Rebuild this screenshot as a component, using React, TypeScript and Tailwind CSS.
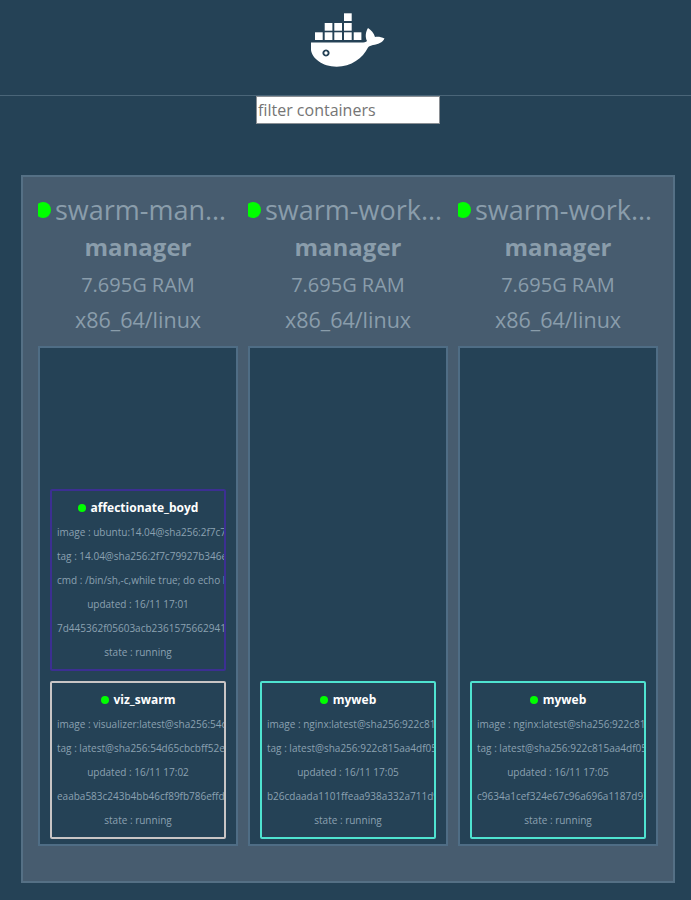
const font = "font-['Open_Sans',sans-serif]";

function Dot({ big }: { big?: boolean }) {
  return big ? (
    <span className="h-4 w-4 -ml-[3px] shrink-0 rounded-full bg-[#00ff00]" />
  ) : (
    <span className="inline-block h-2 w-2 rounded-full bg-[#00ff00]" />
  );
}

function Box({ name, color, lines }: { name: string; color: string; lines: string[] }) {
  return (
    <div className="overflow-hidden rounded-[2px] border-2 px-[5px] pb-[5px]" style={{ borderColor: color }}>
      <div className="flex h-[29px] items-center justify-center gap-[5px] pt-1 text-[12px] font-bold text-white">
        <Dot />
        <span>{name}</span>
      </div>
      {lines.map((l) => (
        <div key={l} className="h-6 whitespace-nowrap text-center text-[10px] leading-6 text-[#8ba1b1]">
          {l}
        </div>
      ))}
    </div>
  );
}

function Node({ name, boxes }: { name: string; boxes: { name: string; color: string; lines: string[] }[] }) {
  return (
    <div className="w-[200px] shrink-0">
      <div className="flex h-[46px] items-center gap-[4px] overflow-hidden pr-[5px] text-[#8a9dab]">
        <Dot big />
        <span className="truncate text-[27px]">{name}</span>
      </div>
      <div className="flex h-[28px] items-center justify-center text-[24px] font-bold text-[#8a9dab]">manager</div>
      <div className="mt-[10px] flex h-[28px] items-center justify-center text-[20px] text-[#8a9dab]">7.695G RAM</div>
      <div className="mt-[7px] flex h-[28px] items-center justify-center text-[21.5px] text-[#8a9dab]">x86_64/linux</div>
      <div className="mt-[12px] flex h-[500px] flex-col justify-end gap-2.5 border-2 border-[#4f6d85] bg-[#254256] pb-[5px] pl-[10px] pr-[10px]">
        {boxes.map((b) => (
          <Box key={b.name} {...b} />
        ))}
      </div>
    </div>
  );
}

export default function App() {
  return (
    <div className={`${font} h-[900px] w-[691px] overflow-hidden bg-[#254256]`}>
      <header className="flex h-[96px] justify-center border-b border-[#4a6578] pl-[5px] pt-[12px]">
        <svg width="74" height="56" viewBox="0 0 74 56" fill="#fff">
          <rect x="33" y="1.3" width="7.7" height="7.7" />
          <rect x="13.7" y="11" width="7.7" height="7.7" />
          <rect x="23.3" y="11" width="7.7" height="7.7" />
          <rect x="33" y="11" width="7.7" height="7.7" />
          <rect x="4" y="20.3" width="7.7" height="7.7" />
          <rect x="13.7" y="20.3" width="7.7" height="7.7" />
          <rect x="23.3" y="20.3" width="7.7" height="7.7" />
          <rect x="33" y="20.3" width="7.7" height="7.7" />
          <rect x="42.7" y="20.3" width="7.7" height="7.7" />
          <path
            fillRule="evenodd"
            d="M0 30.5H50C53 30.5 55 30 56 29C54 25 54.5 20 57 16C60 18 63 21 64 25C67 24.5 70.5 25 73.5 26.5C71.5 30.5 67 32.5 62 33C60 33.5 58 34 57 35.5C52 46 40 54.7 25.7 54.7C11 54.7 1 46 0 38ZM15 37.4a3.6 3.6 0 1 0 0.01 0ZM15 39.3a1.7 1.7 0 1 1 -0.01 0Z"
          />
        </svg>
      </header>
      <div className="flex justify-center pl-[5px]">
        <input
          placeholder="filter containers"
          className="h-[28px] w-[184px] border border-[#8a8f94] bg-white px-px text-[16px] text-[#757575] placeholder:text-[#757575]"
        />
      </div>
      <div className="ml-[21px] mt-[51px] flex h-[708px] w-[654px] gap-[10px] border-2 border-[#557085] bg-[#475c6f] px-[15px] pt-[10px]">
        <Node
          name="swarm-manager"
          boxes={[
            {
              name: "affectionate_boyd",
              color: "#3c2f92",
              lines: [
                "image : ubuntu:14.04@sha256:2f7c79927b346e436cc14c92bd4e5bd778c3bd7037f35bc639ac1589a7acfa90",
                "tag : 14.04@sha256:2f7c79927b346e436cc14c92bd4e5bd778c3bd7037f35bc639ac1589a7acfa90",
                "cmd : /bin/sh,-c,while true; do echo hello world; sleep 1; done",
                "updated : 16/11 17:01",
                "7d445362f05603acb2361575662941f2a2f8c3a9e1d0b7c4",
                "state : running",
              ],
            },
            {
              name: "viz_swarm",
              color: "#c9c5c5",
              lines: [
                "image : visualizer:latest@sha256:54d65cbcbff52ee7d789cd285fbe68f07a46e3419c8fcded437af4c616915c85",
                "tag : latest@sha256:54d65cbcbff52ee7d789cd285fbe68f07a46e3419c8fcded437af4c616915c85",
                "updated : 16/11 17:02",
                "eaaba583c243b4bb46cf89fb786effd2c1b7a9e0d3f4a6c8",
                "state : running",
              ],
            },
          ]}
        />
        <Node
          name="swarm-worker1"
          boxes={[
            {
              name: "myweb",
              color: "#4fe3d0",
              lines: [
                "image : nginx:latest@sha256:922c815aa4df050d4df476e92daed4231f466acc8ee90e0e774951b0fd7195a4",
                "tag : latest@sha256:922c815aa4df050d4df476e92daed4231f466acc8ee90e0e774951b0fd7195a4",
                "updated : 16/11 17:05",
                "b26cdaada1101ffeaa938a332a711d9c3e5f7a8b0c1d2e3f",
                "state : running",
              ],
            },
          ]}
        />
        <Node
          name="swarm-worker2"
          boxes={[
            {
              name: "myweb",
              color: "#4fe3d0",
              lines: [
                "image : nginx:latest@sha256:922c815aa4df050d4df476e92daed4231f466acc8ee90e0e774951b0fd7195a4",
                "tag : latest@sha256:922c815aa4df050d4df476e92daed4231f466acc8ee90e0e774951b0fd7195a4",
                "updated : 16/11 17:05",
                "c9634a1cef324e67c96a696a1187d93b2e4f6a8c0d1e2f3a",
                "state : running",
              ],
            },
          ]}
        />
      </div>
    </div>
  );
}
